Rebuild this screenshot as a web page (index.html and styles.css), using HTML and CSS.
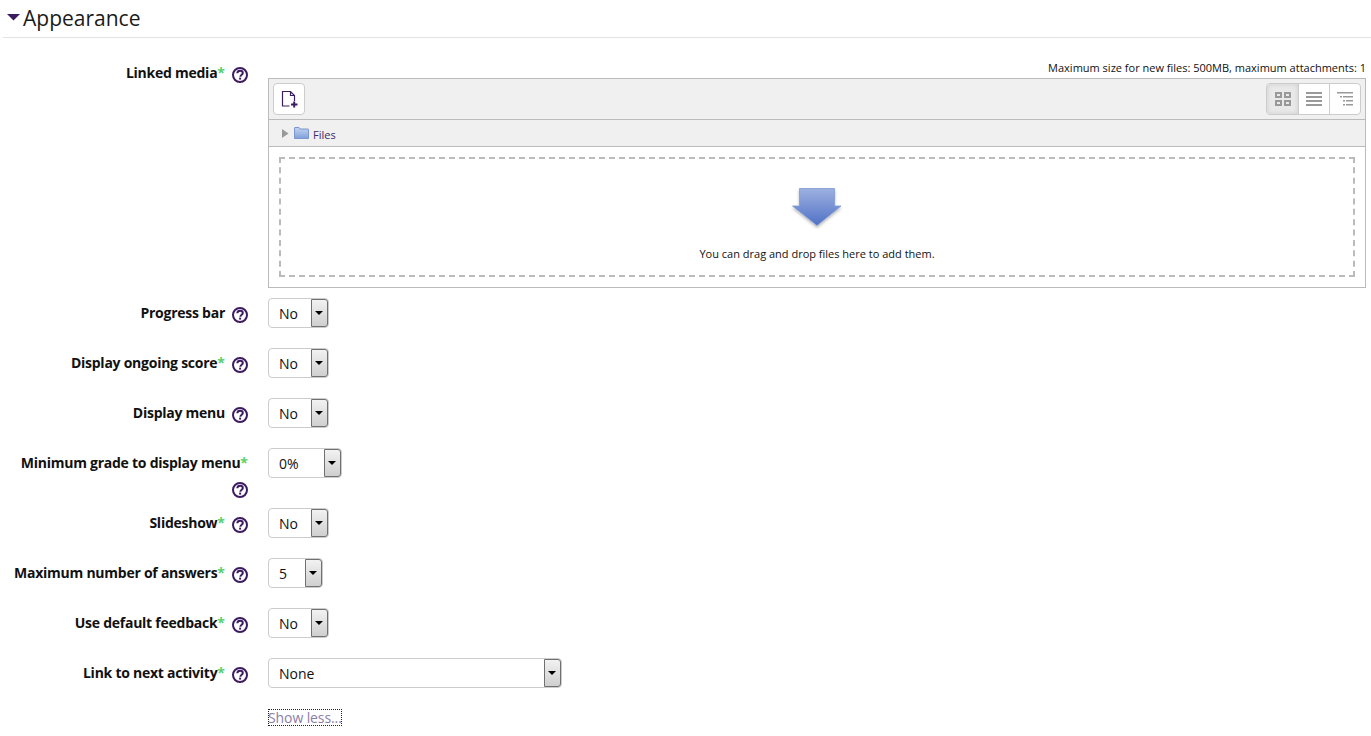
FILE: index.html
```html
<!DOCTYPE html>
<html lang="en">
<head>
<meta charset="utf-8">
<title>Appearance</title>
<link rel="stylesheet" href="styles.css">
</head>
<body>
<section class="section">
  <h3 class="section-head">
    <svg class="caret" width="14" height="8" viewBox="0 0 14 8"><path d="M0 1h13L6.500 7.500z" fill="#3c1c61"/></svg>
    Appearance
  </h3>
  <div class="form">
    <div class="row row-media">
      <div class="label"><b>Linked media</b><i>*</i><svg class="help"><use href="#help"/></svg></div>
      <div class="control">
        <div class="limits">Maximum size for new files: 500MB, maximum attachments: 1</div>
        <div class="picker">
          <div class="toolbar">
            <button class="add" type="button">
              <svg width="18" height="18" viewBox="0 0 18 18" fill="none" stroke="#3c1c61" stroke-width="1.200"><path d="M9.500 16H2.500V1.500h8l4 4V11M10.500 1.500v4h4"/><path d="M11 14.500h6.500M14.200 11.500v6" stroke-width="2"/></svg>
            </button>
            <div class="views">
              <span class="view active"><svg width="16" height="14" viewBox="0 0 16 14" fill="none" stroke="#999" stroke-width="2"><path d="M1 1h5v4H1zM10 1h5v4h-5zM1 9h5v4H1zM10 9h5v4h-5z"/></svg></span>
              <span class="view"><svg width="16" height="14" viewBox="0 0 16 14" fill="#999"><path d="M0 0h16v2H0zM0 4h16v2H0zM0 8h16v2H0zM0 12h16v2H0z"/></svg></span>
              <span class="view"><svg width="16" height="14" viewBox="0 0 16 14" fill="#999"><path d="M0 0h16v1.500H0zM3 4h2v1.500H3zM6 4h10v1.500H6zM6 8h2v1.500H6zM9 8h7v1.500H9zM6 12h2v1.500H6zM9 12h7v1.500H9z"/></svg></span>
            </div>
          </div>
          <div class="path">
            <svg width="8" height="9" viewBox="0 0 8 9"><path d="M1 0l6.500 4.500L1 9z" fill="#999"/></svg>
            <svg class="folder" width="15" height="12" viewBox="0 0 15 12"><defs><linearGradient id="fg" x1="0" y1="0" x2="0" y2="1"><stop offset="0" stop-color="#c5d5f0"/><stop offset="1" stop-color="#7f9fdc"/></linearGradient></defs><path d="M.500 11.500V1a.500.500 0 0 1 .500-.500h4l1 1.500h8a.500.500 0 0 1 .500.500v9z" fill="url(#fg)" stroke="#7b97cf"/></svg>
            <span class="path-name">Files</span>
          </div>
          <div class="drop-wrap">
            <div class="drop">
              <svg class="arrow" width="52" height="42" viewBox="0 0 52 42"><defs><linearGradient id="ag" x1="0" y1="0" x2="0" y2="1"><stop offset="0" stop-color="#9db1e0"/><stop offset="1" stop-color="#5071c6"/></linearGradient><filter id="as" x="-20%" y="-20%" width="140%" height="150%"><feDropShadow dx="0" dy="2" stdDeviation="1.500" flood-color="#000" flood-opacity=".28"/></filter></defs><path d="M8.500 1.500h35V19H50L26 38.500 1.500 19h7z" fill="url(#ag)" stroke="#7f9ad6" stroke-width=".8" filter="url(#as)"/></svg>
              <p>You can drag and drop files here to add them.</p>
            </div>
          </div>
        </div>
      </div>
    </div>
    <div class="row"><div class="label"><b>Progress bar</b><svg class="help"><use href="#help"/></svg></div><div class="control"><div class="select w60"><span>No</span><em></em></div></div></div>
    <div class="row"><div class="label"><b>Display ongoing score</b><i>*</i><svg class="help"><use href="#help"/></svg></div><div class="control"><div class="select w60"><span>No</span><em></em></div></div></div>
    <div class="row"><div class="label"><b>Display menu</b><svg class="help"><use href="#help"/></svg></div><div class="control"><div class="select w60"><span>No</span><em></em></div></div></div>
    <div class="row row-tall"><div class="label"><b>Minimum grade to display menu</b><i>*</i><svg class="help"><use href="#help"/></svg></div><div class="control"><div class="select w73"><span>0%</span><em></em></div></div></div>
    <div class="row"><div class="label"><b>Slideshow</b><i>*</i><svg class="help"><use href="#help"/></svg></div><div class="control"><div class="select w60"><span>No</span><em></em></div></div></div>
    <div class="row"><div class="label"><b>Maximum number of answers</b><i>*</i><svg class="help"><use href="#help"/></svg></div><div class="control"><div class="select w54"><span>5</span><em></em></div></div></div>
    <div class="row"><div class="label"><b>Use default feedback</b><i>*</i><svg class="help"><use href="#help"/></svg></div><div class="control"><div class="select w60"><span>No</span><em></em></div></div></div>
    <div class="row"><div class="label"><b>Link to next activity</b><i>*</i><svg class="help"><use href="#help"/></svg></div><div class="control"><div class="select w293"><span>None</span><em></em></div></div></div>
    <div class="row row-last"><div class="label"></div><div class="control"><a class="less" href="#">Show less...</a></div></div>
  </div>
</section>
<svg class="defs" width="0" height="0"><symbol id="help" viewBox="0 0 16 16"><circle cx="8" cy="8" r="7" fill="none" stroke="#3c1c61" stroke-width="2"/><path d="M5.300 6.200C5.400 4.600 6.500 3.700 8.100 3.700c1.600 0 2.700.9 2.700 2.200 0 1.100-.7 1.600-1.400 2.100-.7.500-1 .8-1 1.700" fill="none" stroke="#3c1c61" stroke-width="2"/><rect x="7.100" y="10.600" width="2" height="2" fill="#3c1c61"/></symbol></svg>
</body>
</html>
```
FILE: styles.css
```css
* { box-sizing: border-box; }
html, body { margin: 0; padding: 0; }
body {
  font-family: "Open Sans", sans-serif;
  font-size: 14px;
  color: #000;
  background: #fff;
  height: 736px;
  overflow: hidden;
}
.section { padding: 0 0 0 3px; }
.section-head {
  margin: 0;
  height: 38px;
  padding: 4px 0 6px 4px;
  font-size: 21px;
  font-weight: 400;
  line-height: 28px;
  color: #1a1a1a;
  border-bottom: 1px solid #e3e3e3;
  display: flex;
  align-items: center;
  gap: 2px;
}
.caret { flex: none; margin-top: -2px; }
.form { display: flex; flex-direction: column; padding-top: 20px; }
.row { display: grid; grid-template-columns: 245px 1fr; column-gap: 20px; height: 50px; }
.row-media { height: 240px; }
.row-tall { height: 60px; }
.row-last { height: 40px; }
.label {
  text-align: right;
  line-height: 24px;
  padding-top: 3px;
  color: #111;
}
.row-tall .label { line-height: 25px; padding-top: 2px; }
.label b { font-weight: 700; font-size: 14px; letter-spacing: -.25px; }
.label i { font-style: normal; color: #5ad06a; font-weight: 700; }
.help { width: 16px; height: 16px; margin-left: 7px; vertical-align: -5px; display: inline-block; }
.control { padding-right: 5px; }
.limits { font-size: 11px; text-align: right; line-height: 16px; height: 18px; margin-top: 2px; color: #111; white-space: nowrap; }
.picker { border: 1px solid #bbb; height: 210px; display: flex; flex-direction: column; background: #fff; }
.toolbar {
  height: 41px;
  background: #f0f0f0;
  border-bottom: 1px solid #bbb;
  display: flex;
  justify-content: space-between;
  padding: 4px;
}
.add {
  width: 32px;
  height: 32px;
  padding: 0;
  background: #fff;
  border: 1px solid #ccc;
  border-radius: 4px;
  display: flex;
  align-items: center;
  justify-content: center;
}
.views { display: flex; border: 1px solid #ccc; border-radius: 4px; background: #fff; height: 32px; overflow: hidden; }
.view { width: 31px; display: flex; align-items: center; justify-content: center; border-left: 1px solid #ccc; }
.view:first-child { border-left: 0; }
.view.active { background: #e9e9e9; box-shadow: inset 0 0 5px rgba(0,0,0,.12); }
.path {
  height: 27px;
  background: #f0f0f0;
  border-bottom: 1px solid #bbb;
  display: flex;
  align-items: center;
  padding-left: 12px;
  font-size: 11px;
  color: #3c2a6a;
}
.path-name { padding-top: 2px; }
.folder { margin: 0 4px 0 5px; }
.drop-wrap { flex: 1; padding: 10px; }
.drop {
  height: 120px;
  border: 2px dashed #bbb;
  display: flex;
  flex-direction: column;
  align-items: center;
  padding-top: 28px;
}
.arrow { display: block; }
.drop p { margin: 17px 0 0; font-size: 11px; line-height: 16px; color: #111; }
.select {
  height: 30px;
  position: relative;
  background: #fff;
  border: 1px solid #ccc;
  border-radius: 4px;
  font-size: 14px;
  line-height: 28px;
  padding: 1px 0 0 10px;
  color: #111;
}
.select em {
  position: absolute;
  top: 0;
  right: 0;
  width: 17px;
  height: 28px;
  border: 1px solid #707070;
  border-radius: 0 3px 3px 0;
  background: linear-gradient(#f2f2f2, #cfcfcf);
}
.select em::after {
  content: "";
  position: absolute;
  left: 3px;
  top: 11px;
  border: 4px solid transparent;
  border-top: 4px solid #000;
  border-bottom: 0;
}
.w54 { width: 55px; }
.w60 { width: 61px; }
.w73 { width: 74px; }
.w293 { width: 294px; }
.less {
  display: inline-block;
  color: #8a7ea8;
  text-decoration: none;
  font-size: 14px;
  line-height: 17px;
  margin-top: 1px;
  letter-spacing: -.1px;
  outline: 1px dotted #222;
  outline-offset: -1px;
}
.defs { position: absolute; }
```
